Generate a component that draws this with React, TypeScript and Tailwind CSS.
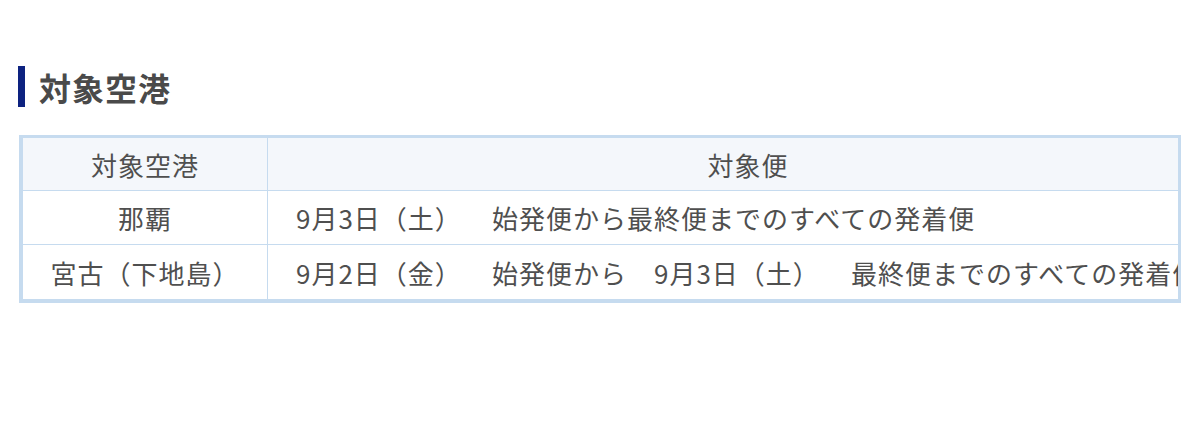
import React from 'react';

const font = { fontFamily: '"Noto Sans CJK JP", "Noto Sans", sans-serif' };

const rows = [
  {
    airport: '那覇',
    segments: ['9月3日（土）', '始発便から最終便までのすべての発着便'],
  },
  {
    airport: '宮古（下地島）',
    segments: ['9月2日（金）', '始発便から', '9月3日（土）', '最終便までのすべての発着便'],
  },
];

// fixed starting columns for each text chunk, as measured on the page
const segWidths = ['w-[196px]', 'w-[162px]', 'w-[197px]', ''];

export default function App() {
  return (
    <div className="w-[1200px] h-[422px] bg-white overflow-hidden" style={font}>
      <div className="pt-[66px] pl-[18px]">
        {/* heading */}
        <div className="flex items-center h-[41px]">
          <div className="w-[7px] h-full bg-[#0d2280]" />
          <h2 className="ml-[14px] text-[32px] font-bold leading-none tracking-[1px] text-[#4a4a4a]">
            対象空港
          </h2>
        </div>

        {/* table; the right end is cut off by the frame, like on the page */}
        <div className="mt-[28px] ml-[1px] w-[1162px] border-[3px] border-l-[4px] border-b-[4px] border-[#c6dbef] overflow-hidden text-[26px] tracking-[1px] text-[#4f4f4f]">
          <div className="w-max">
            <div className="flex h-[53px] bg-[#f4f7fb] border-b border-[#c6dbef]">
              <div className="w-[245px] shrink-0 border-r border-[#c6dbef] flex items-center justify-center">
                対象空港
              </div>
              <div className="w-[960px] shrink-0 flex items-center justify-center">対象便</div>
            </div>
            {rows.map((row, i) => (
              <div
                key={row.airport}
                className={`flex h-[54px] ${i < rows.length - 1 ? 'border-b border-[#c6dbef]' : ''}`}
              >
                <div className="w-[245px] shrink-0 border-r border-[#c6dbef] flex items-center justify-center">
                  {row.airport}
                </div>
                <div className="w-[960px] shrink-0 flex items-center pl-[28px] whitespace-nowrap">
                  {row.segments.map((s, j) => (
                    <span key={j} className={`inline-block shrink-0 ${j < row.segments.length - 1 ? segWidths[j] : ''}`}>
                      {s}
                    </span>
                  ))}
                </div>
              </div>
            ))}
          </div>
        </div>
      </div>
    </div>
  );
}
